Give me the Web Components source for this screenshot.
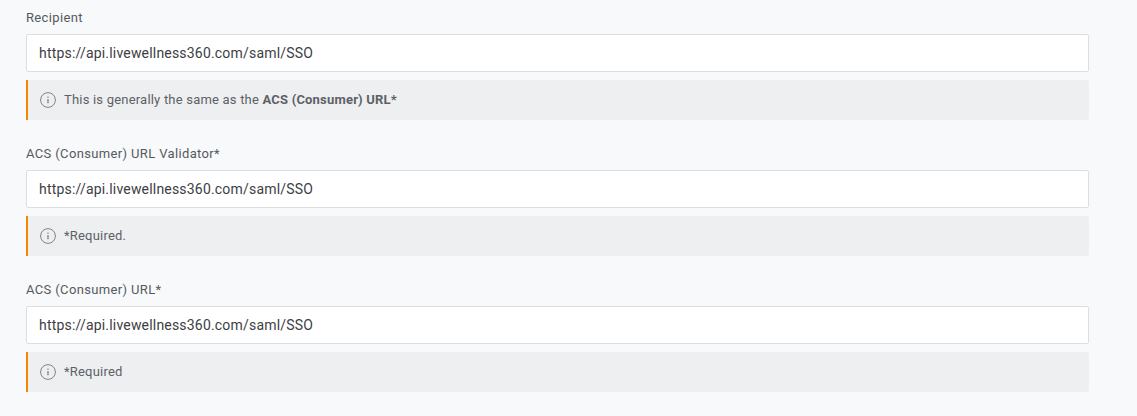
<!DOCTYPE html>
<html>
<head>
<meta charset="utf-8">
<title>SAML settings</title>
<style>
html,body{margin:0;background:#f8f9fb;}
body{font-family:Roboto,"Liberation Sans",sans-serif;overflow:hidden;}
saml-form{padding:8px 48px 0 26px;}
</style>
</head>
<body>
<template id="field-tpl">
<style>
:host{display:block;height:136px;}
label{display:block;height:26px;line-height:19px;font-size:13px;letter-spacing:.36px;color:#55595e;}
input{display:block;box-sizing:border-box;width:100%;height:38px;margin:0;padding:0 12px;border:1px solid #dddee0;border-radius:2px;background:#fff;font:14px Roboto,"Liberation Sans",sans-serif;letter-spacing:.19px;color:#3c4043;outline:none;}
.gap{height:8px;}
</style>
<label id="lab"></label>
<input id="inp" type="text">
<div class="gap"></div>
<slot></slot>
</template>

<template id="note-tpl">
<style>
:host{display:flex;align-items:center;gap:8px;box-sizing:border-box;height:40px;padding:0 12px 2px;border-left:2px solid #f78400;border-radius:0 2px 2px 0;background:#eeeff1;font-size:13px;letter-spacing:.2px;color:#5d6166;}
svg{flex:none;width:16px;height:16px;margin-top:2px;}
::slotted(b){font-weight:700;letter-spacing:.2px;}
</style>
<svg viewBox="0 0 16 16" fill="none" stroke="#7f8287">
<circle cx="8" cy="8" r="7.4"/>
<path d="M8 7v4.2" stroke-width="1.3"/>
<path d="M8 4.4v1.4" stroke-width="1.3"/>
</svg>
<span><slot></slot></span>
</template>

<template id="form-tpl">
<style>
:host{display:block;}
</style>
<slot></slot>
</template>

<saml-form>
<saml-field label="Recipient" value="https://api.livewellness360.com/saml/SSO">
<info-note>This is generally the same as the <b>ACS (Consumer) URL*</b></info-note>
</saml-field>
<saml-field label="ACS (Consumer) URL Validator*" value="https://api.livewellness360.com/saml/SSO">
<info-note>*Required.</info-note>
</saml-field>
<saml-field label="ACS (Consumer) URL*" value="https://api.livewellness360.com/saml/SSO">
<info-note>*Required</info-note>
</saml-field>
</saml-form>

<script>
class SamlForm extends HTMLElement {
    constructor(){
        super();
        this.attachShadow({mode:'open'}).appendChild(document.getElementById('form-tpl').content.cloneNode(true));
    }
}
class SamlField extends HTMLElement {
    constructor(){
        super();
        this.attachShadow({mode:'open'}).appendChild(document.getElementById('field-tpl').content.cloneNode(true));
    }
    connectedCallback(){
        this.shadowRoot.getElementById('lab').textContent=this.getAttribute('label') ?? '';
        this.shadowRoot.getElementById('inp').setAttribute('value',this.getAttribute('value') ?? '');
    }
}
class InfoNote extends HTMLElement {
    constructor(){
        super();
        this.attachShadow({mode:'open'}).appendChild(document.getElementById('note-tpl').content.cloneNode(true));
    }
}
customElements.define('saml-form',SamlForm);
customElements.define('saml-field',SamlField);
customElements.define('info-note',InfoNote);
</script>
</body>
</html>
